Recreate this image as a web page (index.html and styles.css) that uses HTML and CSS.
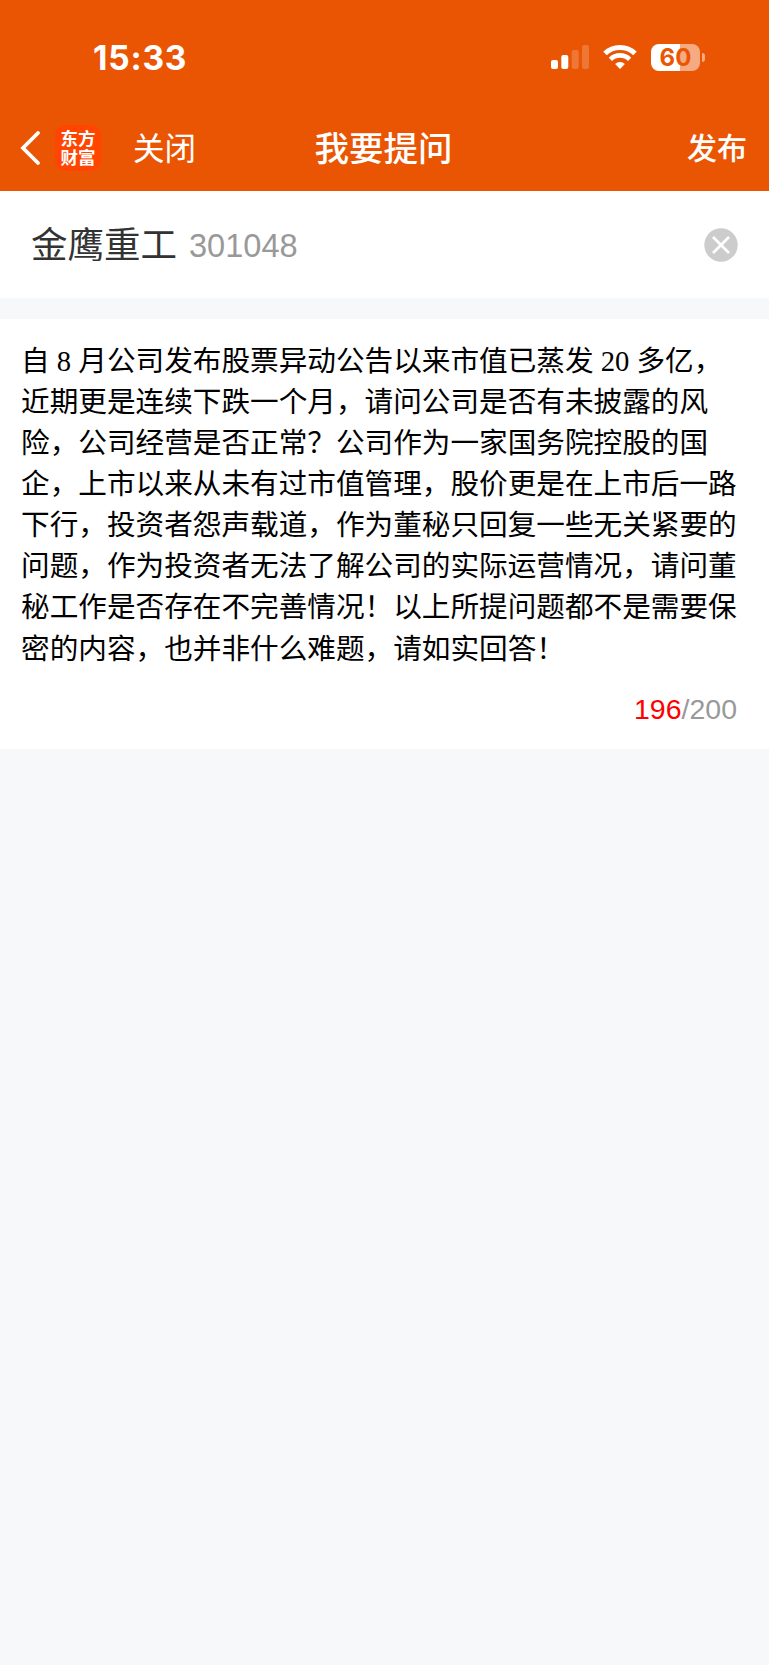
FILE: index.html
```html
<!DOCTYPE html>
<html lang="zh-CN">

<head>
    <meta charset="UTF-8">
    <meta name="viewport" content="width=device-width, initial-scale=1.0">
    <title>我要提问</title>

    <link rel="stylesheet" href="styles.css">
</head>

<body>
    <header class="header">
        <div class="status-bar">
            <span class="time">15:33</span>
            <div class="status-icons">
                <svg class="signal" width="40" height="26" viewBox="0 0 40 26" fill="#fff">
                    <rect x="1" y="16" width="7" height="9" rx="2" />
                    <rect x="11.3" y="11" width="7" height="14" rx="2" />
                    <rect x="21.7" y="6" width="7" height="19" rx="2" opacity=".2" />
                    <rect x="32" y="1" width="7" height="24" rx="2" opacity=".2" />
                </svg>
                <svg class="wifi" width="34" height="26" viewBox="0 0 34 26" fill="none" stroke="#fff">
                    <path d="M2 9.5C10 1.5 24 1.5 32 9.5" stroke-width="5" />
                    <path d="M7.4 15.3C12.7 10 21.3 10 26.6 15.3" stroke-width="4.6" />
                    <path d="M17 25L12.1 20.1C14.8 17.4 19.2 17.4 21.9 20.1Z" fill="#fff" stroke="none" />
                </svg>
                <div class="battery">
                    <span class="battery-level">60</span>
                    <span class="battery-cap"></span>
                </div>
            </div>
        </div>
        <nav class="nav">
            <div class="nav-left">
                <svg class="back" width="20" height="34" viewBox="0 0 20 34" fill="none" stroke="#fff" stroke-width="3.8" stroke-linecap="round" stroke-linejoin="miter">
                    <path d="M18 2L3 17L18 32" />
                </svg>
                <div class="logo">东方<br>财富</div>
                <span class="close">关闭</span>
            </div>
            <h1 class="title">我要提问</h1>
            <span class="publish">发布</span>
        </nav>
    </header>

    <section class="stock">
        <span class="stock-name">金鹰重工</span>
        <span class="stock-code">301048</span>
        <svg class="clear" width="34" height="34" viewBox="0 0 34 34">
            <circle cx="17" cy="17" r="16.7" fill="#ccc" />
            <path d="M9 9L25 25M25 9L9 25" stroke="#fff" stroke-width="2.6" />
        </svg>
    </section>

    <section class="question">
        <p class="content">自 8 月公司发布股票异动公告以来市值已蒸发 20 多亿，<br>近期更是连续下跌一个月，请问公司是否有未披露的风<br>险，公司经营是否正常？公司作为一家国务院控股的国<br>企，上市以来从未有过市值管理，股价更是在上市后一路<br>下行，投资者怨声载道，作为董秘只回复一些无关紧要的<br>问题，作为投资者无法了解公司的实际运营情况，请问董<br>秘工作是否存在不完善情况！以上所提问题都不是需要保<br>密的内容，也并非什么难题，请如实回答！</p>
        <div class="counter"><span class="count">196</span>/200</div>
    </section>
</body>

</html>
```
FILE: styles.css
```css
* {
    box-sizing: border-box;
}

body {
    margin: 0;
    background-color: #f6f8fa;
    font-family: "Liberation Sans", "Noto Sans CJK SC", sans-serif;
}

svg {
    display: block;
}

.header {
    height: 191px;
    background-color: #ea5504;
    color: #fff;
}

.status-bar {
    height: 106px;
    padding: 8px 69px 0 93px;
    display: flex;
    justify-content: space-between;
    align-items: center;
}

.time {
    padding-top: 1px;
    font-family: Inter, sans-serif;
    font-size: 33.5px;
    font-weight: 700;
    letter-spacing: .8px;
}

.status-icons {
    display: flex;
    align-items: center;
}

.wifi {
    margin: 0 14px 0 13px;
}

.battery {
    position: relative;
    width: 49px;
    height: 27px;
    border-radius: 8px;
    background: linear-gradient(to right, #fff 60%, #f5aa82 60%);
    text-align: center;
}

.battery-level {
    display: block;
    font-family: Inter, sans-serif;
    font-size: 24px;
    font-weight: 700;
    line-height: 27px;
    color: #ea5504;
}

.battery-cap {
    position: absolute;
    left: 51px;
    top: 9px;
    width: 3px;
    height: 9px;
    border-radius: 0 4px 4px 0;
    background-color: #f5aa82;
}

.nav {
    height: 84px;
    padding: 0 22px 0 20px;
    display: grid;
    grid-template-columns: 1fr auto 1fr;
    align-items: center;
}

.nav-left {
    display: flex;
    align-items: center;
}

.logo {
    width: 46px;
    height: 46px;
    margin: 0 32px 0 15px;
    padding-top: 3px;
    border-radius: 10px;
    background-color: #ff4500;
    font-family: "Noto Sans CJK SC", sans-serif;
    font-size: 17.5px;
    font-weight: 700;
    line-height: 19px;
    text-align: center;
}

.close {
    padding-bottom: 4px;
    font-size: 31.5px;
}

.title {
    margin: 0;
    padding-bottom: 4px;
    font-size: 34.5px;
    font-weight: 500;
}

.publish {
    padding-bottom: 4px;
    font-size: 30px;
    font-weight: 500;
    text-align: right;
}

.stock {
    height: 107px;
    padding: 0 31px;
    background-color: #fff;
    display: flex;
    align-items: center;
}

.stock-name {
    padding-bottom: 4px;
    font-size: 36.5px;
    color: #333;
}

.stock-code {
    margin-left: 12px;
    padding-top: 2px;
    font-size: 32.6px;
    color: #999;
}

.clear {
    margin-left: auto;
}

.question {
    height: 430px;
    margin-top: 21px;
    padding: 22px 32px 0 21px;
    background-color: #fff;
}

.content {
    margin: 0;
    font-family: "Liberation Serif", "Noto Sans CJK SC", serif;
    font-size: 28.64px;
    line-height: 41.08px;
    color: #000;
    white-space: nowrap;
}

.counter {
    margin-top: 21px;
    font-size: 28.5px;
    line-height: 36px;
    color: #999;
    text-align: right;
}

.count {
    color: #f00;
}
```
